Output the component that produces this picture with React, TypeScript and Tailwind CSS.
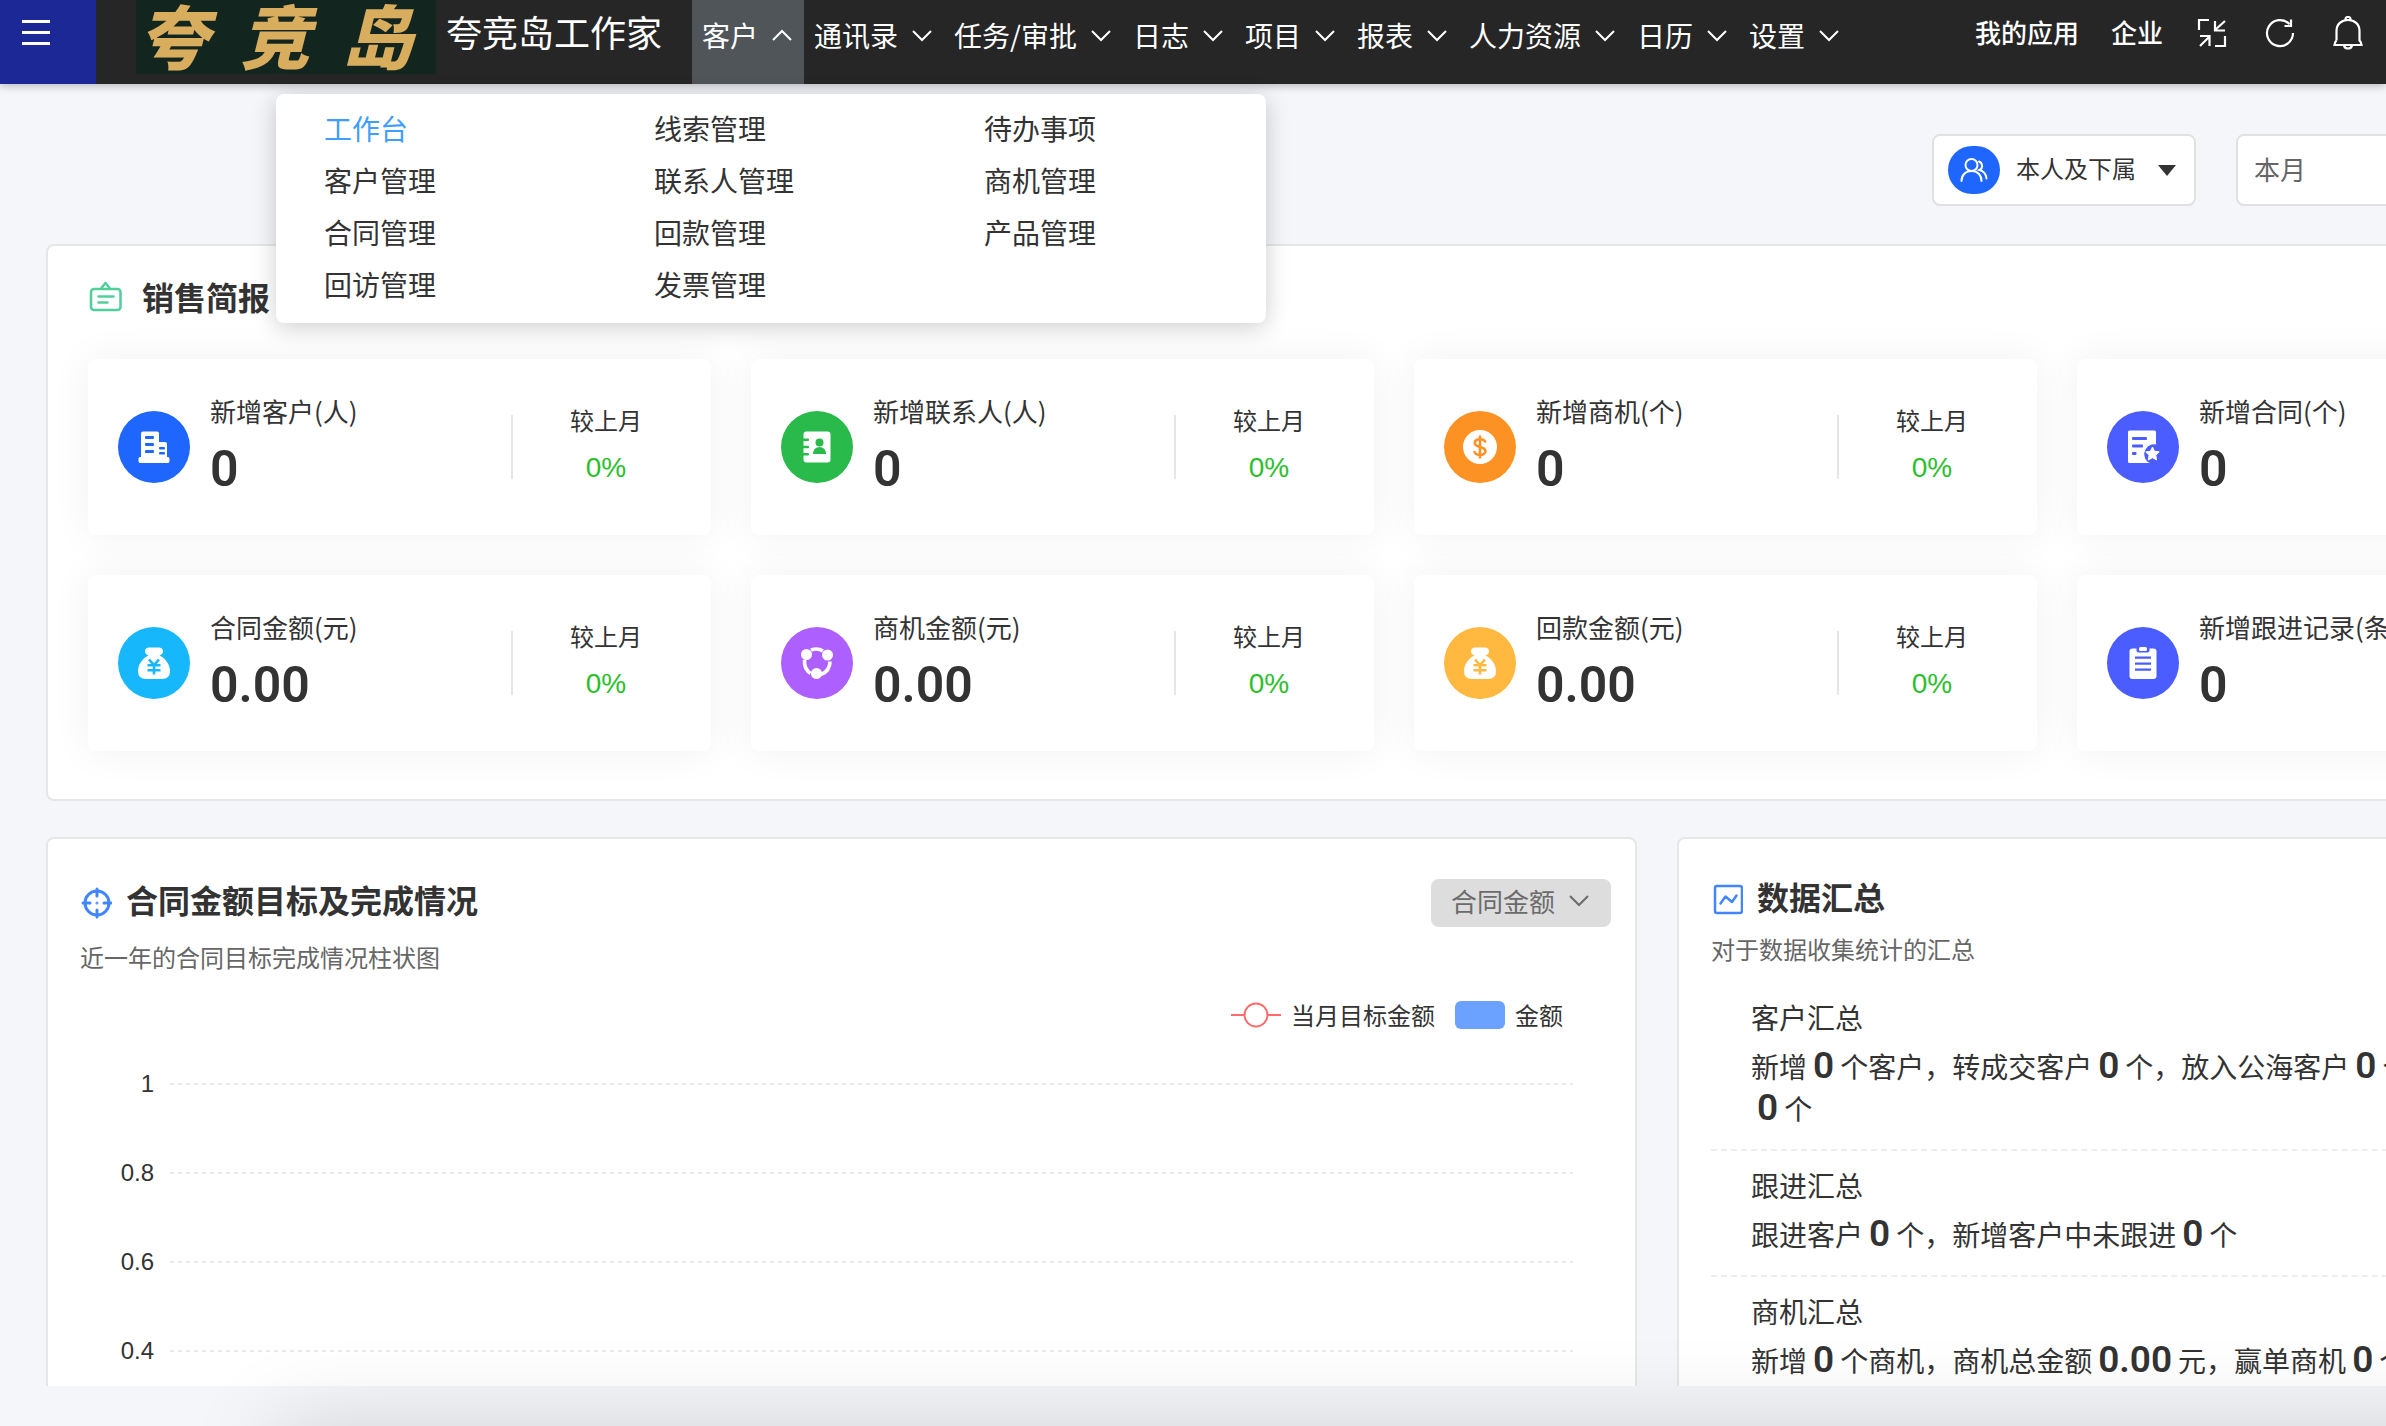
import { ReactNode } from "react";

type IconProps = { className?: string };

function Chevron({ className = "", up = false }: { className?: string; up?: boolean }) {
  return (
    <svg viewBox="0 0 24 24" className={className} fill="none" stroke="currentColor" strokeWidth="2" aria-hidden="true">
      <path d={up ? "M3 17 L12 8 L21 17" : "M3 8 L12 17 L21 8"} />
    </svg>
  );
}

function BuildingIcon() {
  return (
    <svg viewBox="0 0 32 32" className="size-8" aria-hidden="true">
      <path fill="#fff" d="M3 2.5Q3 0.5 5 0.5H19Q21 0.5 21 2.5V11H27Q29 11 29 13V26H30Q31.500 26 31.500 28V30Q31.500 32 30 32H2Q0.500 32 0.500 30V28Q0.500 26 2 26H3Z" />
      <g fill="#1f66ff">
        <rect x="7" y="5" width="9" height="3" rx="1" />
        <rect x="7" y="12" width="9" height="3" rx="1" />
        <rect x="7" y="19" width="9" height="3" rx="1" />
        <rect x="21" y="16" width="6" height="2.500" rx="1" />
        <rect x="21" y="21" width="6" height="2.500" rx="1" />
      </g>
    </svg>
  );
}

function ContactsIcon() {
  return (
    <svg viewBox="0 0 32 32" className="size-8" aria-hidden="true">
      <rect x="2.500" y="0.500" width="27" height="31" rx="3" fill="#fff" />
      <g fill="#29ba4b">
        <rect x="1" y="7.500" width="7" height="2.500" rx="1" />
        <rect x="1" y="14.800" width="7" height="2.500" rx="1" />
        <rect x="1" y="22" width="7" height="2.500" rx="1" />
        <circle cx="18.500" cy="11.500" r="4" />
        <path d="M12 23c0-4 2.500-7 6.500-7s6.500 3 6.500 7z" />
      </g>
    </svg>
  );
}

function DollarIcon() {
  return (
    <svg viewBox="0 0 34 34" className="size-[34px]" aria-hidden="true">
      <circle cx="17" cy="17" r="17" fill="#fff" />
      <path d="M22.500 12.500C22 10.500 20 9.200 17 9.200c-3 0-5.200 1.400-5.200 3.800 0 5.200 10.600 2.600 10.600 7.900 0 2.500-2.400 4-5.400 4s-5.300-1.500-5.700-3.800M17 5.500v23" fill="none" stroke="#fd9224" strokeWidth="2.600" />
    </svg>
  );
}

function ContractStarIcon() {
  return (
    <svg viewBox="0 0 34 34" className="size-[34px]" aria-hidden="true">
      <path fill="#fff" d="M2 2Q2 0.500 3.500 0.500H28.500Q30 0.500 30 2V14.500A10 10 0 0 0 19 28Q20.500 32 24 33H3.500Q2 33 2 31.500Z" />
      <g fill="#4b5dff">
        <rect x="6" y="7" width="15" height="3" rx="1" />
        <rect x="6" y="14.500" width="11" height="3" rx="1" />
        <rect x="6" y="22" width="4.500" height="3" rx="1" />
      </g>
      <path fill="#fff" stroke="#fff" strokeLinejoin="round" d="M26.500 17l2 4.300 4.700.6-3.400 3.300.8 4.800-4.100-2.300-4.200 2.300.8-4.800-3.400-3.300 4.700-.6z" />
    </svg>
  );
}

function MoneyBagIcon({ ink }: { ink: string }) {
  return (
    <svg viewBox="0 0 32 32" className="size-8" aria-hidden="true">
      <path fill="#fff" d="M10.500 0.500H21.500Q25 1 25 4.500Q25 7 21.500 8.500C28 11.500 32 18 32 24Q32 32 24 32H8Q0 32 0 24C0 18 4 11.500 10.500 8.500Q7 7 7 4.500Q7 1 10.500 0.500Z" />
      <path d="M11 12.500L16 18L21 12.500M9.500 18.200H22.500M9.500 23.200H22.500M16 18V27.500" fill="none" stroke={ink} strokeWidth="2.600" />
    </svg>
  );
}

function CycleIcon() {
  return (
    <svg viewBox="0 0 32 32" className="size-8" aria-hidden="true">
      <g fill="none" stroke="#fff" strokeWidth="3.600">
        <path d="M10 3.200Q16 0.500 22 3.800" />
        <path d="M3.500 13Q3 22 9.500 26.500" />
        <path d="M29 14.500Q29 24 20 27.500" />
      </g>
      <g fill="#fff">
        <circle cx="5.500" cy="7.500" r="5.500" />
        <circle cx="26.500" cy="8" r="5.500" />
        <circle cx="15.500" cy="26.500" r="5.500" />
      </g>
    </svg>
  );
}

function ClipboardIcon() {
  return (
    <svg viewBox="0 0 32 32" className="size-8" aria-hidden="true">
      <rect x="2.500" y="1.500" width="27" height="30.500" rx="3" fill="#fff" />
      <path d="M9.500 0V3.500Q9.500 5.500 11.500 5.500H20.500Q22.500 5.500 22.500 3.500V0Z" fill="#4b5dff" />
      <rect x="12" y="0" width="8" height="4" rx="1.500" fill="#fff" />
      <path d="M8 10.700H24M8 16.700H24M8 22.700H24" stroke="#4b5dff" strokeWidth="2.200" />
    </svg>
  );
}

function PeopleIcon({ className }: IconProps) {
  return (
    <svg viewBox="0 0 28 24" className={className} fill="none" stroke="#fff" strokeWidth="2" strokeLinecap="round" aria-hidden="true">
      <circle cx="11.500" cy="7" r="6" />
      <path d="M1.500 23c0-6 4-10 10-10s10 4 10 10" />
      <path d="M19 3.500c4 1.500 4 7 0.500 8.500 4 1 6.500 4 7 8.500" />
    </svg>
  );
}

const navItems = ["客户", "通讯录", "任务/审批", "日志", "项目", "报表", "人力资源", "日历", "设置"];

const menuItems = [
  "工作台", "线索管理", "待办事项",
  "客户管理", "联系人管理", "商机管理",
  "合同管理", "回款管理", "产品管理",
  "回访管理", "发票管理",
];

const stats: { label: string; value: string; color: string; icon: ReactNode }[] = [
  { label: "新增客户(人)", value: "0", color: "bg-[#1f66ff]", icon: <BuildingIcon /> },
  { label: "新增联系人(人)", value: "0", color: "bg-[#29ba4b]", icon: <ContactsIcon /> },
  { label: "新增商机(个)", value: "0", color: "bg-[#fd9224]", icon: <DollarIcon /> },
  { label: "新增合同(个)", value: "0", color: "bg-[#4b5dff]", icon: <ContractStarIcon /> },
  { label: "合同金额(元)", value: "0.00", color: "bg-[#16b7fb]", icon: <MoneyBagIcon ink="#16b7fb" /> },
  { label: "商机金额(元)", value: "0.00", color: "bg-[#ad5fff]", icon: <CycleIcon /> },
  { label: "回款金额(元)", value: "0.00", color: "bg-[#ffb940]", icon: <MoneyBagIcon ink="#ffb940" /> },
  { label: "新增跟进记录(条)", value: "0", color: "bg-[#4b5dff]", icon: <ClipboardIcon /> },
];

function StatCard({ label, value, color, icon }: (typeof stats)[number]) {
  return (
    <article className="flex h-44 items-center rounded-lg bg-white pl-[30px] shadow-[0_0_40px_rgba(0,0,0,0.06)]">
      <div className={`flex size-18 shrink-0 items-center justify-center rounded-full ${color}`}>{icon}</div>
      <div className="ml-5 min-w-0 flex-1 pb-1">
        <h3 className="text-[26px] leading-10 whitespace-nowrap">{label}</h3>
        <p className="mt-2 font-['Roboto',sans-serif] text-[50px] leading-[60px] font-semibold">{value}</p>
      </div>
      <div className="h-16 w-0.5 bg-[#e6e6e6]" />
      <div className="w-[198px] pr-3 pb-1.5 text-center">
        <p className="text-2xl leading-10">较上月</p>
        <p className="mt-2 font-['Liberation_Sans',sans-serif] text-[28px] leading-10 text-[#2bbf2b]">0%</p>
      </div>
    </article>
  );
}

function Num({ children }: { children: ReactNode }) {
  return <b className="mx-1.5 font-['Roboto',sans-serif] text-[37px] leading-none font-semibold">{children}</b>;
}

function Summary({ title, children }: { title: string; children: ReactNode }) {
  return (
    <section className="border-b-2 border-dashed border-[#eeeeee] pt-3.5 pb-5 pl-10">
      <h3 className="mb-2 text-[28px] leading-10">{title}</h3>
      <p className="text-[28px] leading-[42px] whitespace-nowrap">{children}</p>
    </section>
  );
}

function Header() {
  return (
    <header className="relative z-20 flex h-21 shrink-0 items-start bg-[#262626] text-white shadow-[0_2px_8px_rgba(0,0,0,0.25)]">
      <button aria-label="展开菜单" className="h-21 w-24 shrink-0 bg-[#1b2896] pb-5 pl-[22px]">
        <span className="flex w-7 flex-col gap-2">
          <span className="h-[3px] bg-white" />
          <span className="h-[3px] bg-white" />
          <span className="h-[3px] bg-white" />
        </span>
      </button>
      <div className="ml-10 flex h-[74px] w-[300px] shrink-0 items-center justify-between bg-[#13251f] pr-6 pb-1.5 pl-0.5 text-[70px] leading-none font-black text-[#d8ad5e] italic">
        <span>夸</span>
        <span>竞</span>
        <span>岛</span>
      </div>
      <div className="ml-2.5 shrink-0 text-4xl leading-[62px]">夸竞岛工作家</div>
      <nav className="ml-[30px] flex">
        {navItems.map((item, i) => (
          <button
            key={item}
            className={`flex h-21 items-center gap-3 px-2.5 pb-[15px] text-[28px] whitespace-nowrap ${i === 0 ? "bg-[#4f5558]" : ""}`}
          >
            {item}
            <Chevron up={i === 0} className="size-6" />
          </button>
        ))}
      </nav>
      <div className="ml-auto flex h-[66px] items-center pr-[23px] text-[26px] font-medium">
        <a href="#apps" className="pb-1">我的应用</a>
        <a href="#company" className="ml-8 pb-1">企业</a>
        <button aria-label="退出全屏" className="ml-[34px]">
          <svg viewBox="0 0 30 30" className="size-[30px]" fill="none" stroke="currentColor" strokeWidth="2.200">
            <path d="M2 12V2h10M28 18v10H18M28 3L18 12M18 3v9.500h10M3 28l9-9M3 18h9.500V28" />
          </svg>
        </button>
        <button aria-label="刷新" className="ml-[38px]">
          <svg viewBox="0 0 30 30" className="size-[30px]" fill="none" stroke="currentColor" strokeWidth="2.200">
            <path d="M28 15A13 13 0 1 1 24.500 6.200M26 1.500V8h-6.500" />
          </svg>
        </button>
        <button aria-label="通知" className="ml-[38px]">
          <svg viewBox="0 0 30 34" className="h-[34px] w-[30px]" fill="none" stroke="currentColor" strokeWidth="2.200">
            <path d="M12.500 4.500V3a2.500 2 0 0 1 5 0v1.500M3.500 24.500V15C3.500 8 8.500 4 15 4s11.500 4 11.500 11v9.500q1.500 1 2 4.500h-27q0.500-3.500 2-4.500M11 29.500c0.800 4 7.200 4 8 0" />
          </svg>
        </button>
      </div>
      <div className="absolute top-[94px] left-[276px] grid w-[990px] grid-cols-3 rounded-lg bg-white pt-2 pb-[13px] text-[28px] text-[#333333] shadow-[0_4px_24px_rgba(0,0,0,0.2)]">
        {menuItems.map((item, i) => (
          <a key={item} href="#menu" className={`pl-12 leading-[52px] ${i === 0 ? "text-[#409eff]" : ""}`}>
            {item}
          </a>
        ))}
      </div>
    </header>
  );
}

function TargetPanel() {
  return (
    <section className="rounded-lg border-2 border-[#e6e6e6] bg-white pt-10 pr-6 pl-8">
      <div className="flex h-12 items-center">
        <svg viewBox="-1 0 32 32" className="size-8" fill="none" stroke="#4286ff" strokeWidth="3" strokeLinecap="round" aria-hidden="true">
          <circle cx="16" cy="16" r="12" />
          <path d="M16 2v7M16 23v7M2 16h7M23 16h7" />
          <circle cx="16" cy="16" r="0.500" strokeWidth="2" />
        </svg>
        <h2 className="ml-3.5 pb-2 text-[32px] font-bold">合同金额目标及完成情况</h2>
        <button className="ml-auto flex h-12 items-center gap-3 rounded-lg bg-[#dddddd] px-5 pb-1.5 text-[26px] text-[#6b6b6b]">
          合同金额
          <Chevron className="size-6" />
        </button>
      </div>
      <p className="mt-3 text-2xl leading-9 text-[#666666]">近一年的合同目标完成情况柱状图</p>
      <div className="mt-[26px] mr-12 flex h-7 items-center justify-end text-2xl">
        <svg viewBox="0 0 50 28" className="h-7 w-[50px]" fill="none" stroke="#ff6b6b" strokeWidth="2" aria-hidden="true">
          <path d="M0 14h13M37 14h13" />
          <circle cx="25" cy="14" r="11.500" />
        </svg>
        <span className="ml-2.5">当月目标金额</span>
        <span className="ml-5 h-7 w-[50px] rounded-md bg-[#6ba1ff]" />
        <span className="ml-2.5">金额</span>
      </div>
      <div className="mt-10 mr-[38px] pl-[26px]">
        {["1", "0.8", "0.6", "0.4", "0.2", "0"].map((tick) => (
          <div key={tick} className="flex h-[89px] items-start">
            <span className="w-12 text-right font-['Liberation_Sans',sans-serif] text-2xl leading-[30px]">{tick}</span>
            <svg className="mt-[14px] ml-4 h-0.5 flex-1" aria-hidden="true">
              <line x1="0" y1="1" x2="100%" y2="1" stroke="#eaeaea" strokeWidth="2" strokeDasharray="4 4" />
            </svg>
          </div>
        ))}
      </div>
    </section>
  );
}

function SummaryPanel() {
  return (
    <section className="rounded-lg border-2 border-[#e6e6e6] bg-white px-8 pt-10">
      <div className="flex h-10 items-center">
        <svg viewBox="0 0 32 32" className="size-8" fill="none" stroke="#4286ff" strokeWidth="2.500" strokeLinejoin="round" strokeLinecap="round" aria-hidden="true">
          <rect x="4" y="3" width="27" height="27" rx="2" />
          <path d="M9.500 20.500l5-7 6.500 5.500 4.500-6.500" />
        </svg>
        <h2 className="ml-3.5 pb-1.5 text-[32px] font-bold">数据汇总</h2>
      </div>
      <p className="mt-3 text-2xl leading-9 text-[#666666]">对于数据收集统计的汇总</p>
      <div className="mt-4">
        <Summary title="客户汇总">
          新增<Num>0</Num>个客户，转成交客户<Num>0</Num>个，放入公海客户<Num>0</Num>个，
          <br />
          <Num>0</Num>个
        </Summary>
        <Summary title="跟进汇总">
          跟进客户<Num>0</Num>个，新增客户中未跟进<Num>0</Num>个
        </Summary>
        <Summary title="商机汇总">
          新增<Num>0</Num>个商机，商机总金额<Num>0.00</Num>元，赢单商机<Num>0</Num>个
        </Summary>
      </div>
    </section>
  );
}

export default function App() {
  return (
    <div className="relative flex h-screen flex-col overflow-hidden bg-[#f5f6fa] font-['Noto_Sans_CJK_SC',sans-serif] text-[#333333]">
      <Header />
      <main className="min-h-0 flex-1 overflow-hidden">
        <div className="min-w-[2788px] px-[46px]">
          <div className="flex h-40 items-center justify-end gap-10">
            <button className="mt-3 flex h-18 items-center rounded-lg border-2 border-[#e1e1e1] bg-white pr-[18px] pl-3.5 text-2xl">
              <span className="flex h-12 w-[52px] items-center justify-center rounded-full bg-[#1f66ff]">
                <PeopleIcon className="h-6 w-7" />
              </span>
              <span className="ml-4 pb-1">本人及下属</span>
              <span className="ml-[22px] h-0 w-0 border-x-[9px] border-t-[11px] border-x-transparent border-t-[#333333]" />
            </button>
            <input
              aria-label="时间范围"
              defaultValue="本月"
              className="mt-3 h-18 w-[506px] rounded-lg border-2 border-[#e1e1e1] bg-white px-4 pb-1 text-[26px] text-[#666666]"
            />
          </div>
          <section className="rounded-lg border-2 border-[#e6e6e6] bg-white px-10 pt-[31px] pb-12">
            <div className="flex h-10 items-center">
              <svg viewBox="0 0 34 34" className="size-[34px]" fill="none" stroke="#51cf9b" strokeWidth="2.500" strokeLinecap="round" strokeLinejoin="round" aria-hidden="true">
                <rect x="3" y="9" width="29.500" height="21" rx="3" />
                <path d="M13.500 8l4-5 4 5M10.500 16.500h15M10.500 22.500h9" />
              </svg>
              <h2 className="ml-5 pb-0.5 text-[32px] font-bold">销售简报</h2>
            </div>
            <div className="mt-[42px] grid grid-cols-4 gap-10">
              {stats.map((s) => (
                <StatCard key={s.label} {...s} />
              ))}
            </div>
          </section>
          <div className="mt-9 grid grid-cols-[1591fr_1065fr] gap-10">
            <TargetPanel />
            <SummaryPanel />
          </div>
        </div>
      </main>
      <footer className="h-10 shrink-0" />
      <div className="pointer-events-none absolute top-full right-[-200px] left-[275px] h-40 shadow-[0_0_90px_rgba(0,0,0,0.15)]" />
    </div>
  );
}
